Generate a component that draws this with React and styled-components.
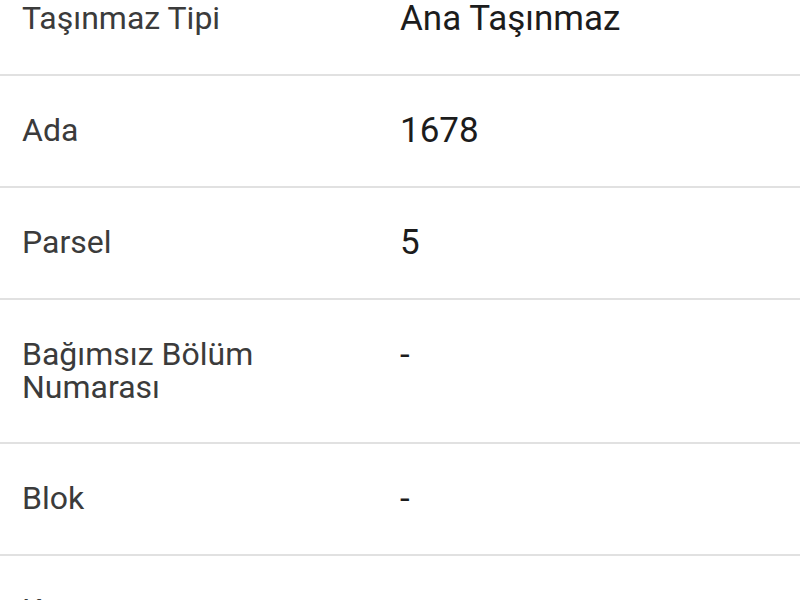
import React from "react";
import styled, { createGlobalStyle } from "styled-components";

const GlobalStyle = createGlobalStyle`
  html, body {
    margin: 0;
    padding: 0;
    background: #ffffff;
    overflow: hidden;
  }
  body {
    font-family: Roboto, "Noto Sans", sans-serif;
  }
`;

const List = styled.div`
  width: 800px;
  margin-top: -36px;
`;

const Row = styled.div`
  display: grid;
  grid-template-columns: 378px 1fr;
  align-items: start;
  padding: 38px 20px 38px 22px;
  border-bottom: 2px solid #e1e1e1;
`;

const Label = styled.div`
  color: #3b3b3b;
  font-size: 32px;
  line-height: 33px;
  max-width: 300px;
`;

const Value = styled.div`
  color: #1c1c1c;
  font-size: 35px;
  line-height: 34px;
`;

const rows = [
  { label: "Taşınmaz Tipi", value: "Ana Taşınmaz" },
  { label: "Ada", value: "1678" },
  { label: "Parsel", value: "5" },
  { label: "Bağımsız Bölüm Numarası", value: "-" },
  { label: "Blok", value: "-" },
  { label: "Kat", value: "-" },
];

const App = () => {
  return (
    <>
      <GlobalStyle />
      <List>
        {rows.map((r) => (
          <Row key={r.label}>
            <Label>{r.label}</Label>
            <Value>{r.value}</Value>
          </Row>
        ))}
      </List>
    </>
  );
};

export default App;
